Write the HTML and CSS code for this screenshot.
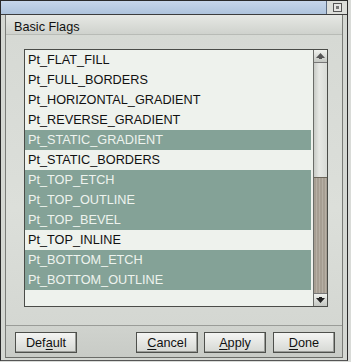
FILE: index.html
```html
<!DOCTYPE html>
<html lang="en">
<head>
  <meta charset="UTF-8">
  <title>Basic Flags</title>
  <link rel="stylesheet" href="styles.css">
</head>
<body>
  <div class="window">
    <div class="titlebar">
      <div class="title-fill"></div>
      <div class="title-btns"><span class="close-btn"></span></div>
    </div>
    <div class="panel">
      <div class="group-label">Basic Flags</div>
      <div class="list-area">
        <div class="listbox">
          <ul class="list">
            <li>Pt_FLAT_FILL</li>
            <li>Pt_FULL_BORDERS</li>
            <li>Pt_HORIZONTAL_GRADIENT</li>
            <li>Pt_REVERSE_GRADIENT</li>
            <li class="sel">Pt_STATIC_GRADIENT</li>
            <li>Pt_STATIC_BORDERS</li>
            <li class="sel">Pt_TOP_ETCH</li>
            <li class="sel">Pt_TOP_OUTLINE</li>
            <li class="sel">Pt_TOP_BEVEL</li>
            <li>Pt_TOP_INLINE</li>
            <li class="sel">Pt_BOTTOM_ETCH</li>
            <li class="sel">Pt_BOTTOM_OUTLINE</li>
          </ul>
          <div class="scrollbar">
            <div class="arrow up"><svg width="9" height="6" viewBox="0 0 9 6"><path d="M4.5 0 L9 5 L6 5 L6 6 L3 6 L3 5 L0 5 Z" fill="#555"/></svg></div>
            <div class="trough"></div>
            <div class="thumb"></div>
            <div class="arrow down"><svg width="9" height="6" viewBox="0 0 9 6"><path d="M4.5 6 L9 1 L6 1 L6 0 L3 0 L3 1 L0 1 Z" fill="#222"/></svg></div>
          </div>
        </div>
      </div>
      <div class="footer">
        <button class="btn">Def<u>a</u>ult</button>
        <div class="spacer"></div>
        <button class="btn btn-cancel"><u>C</u>ancel</button>
        <button class="btn"><u>A</u>pply</button>
        <button class="btn"><u>D</u>one</button>
      </div>
    </div>
  </div>
</body>
</html>
```

FILE: styles.css
```css
html, body {
  margin: 0;
  padding: 0;
  background: #d9dbd8;
}

body {
  font-family: "Liberation Sans", Arial, sans-serif;
  font-size: 12.7px;
  color: #111;
}

.window {
  width: 348px;
  height: 361px;
  box-sizing: border-box;
  background: #d4d7d2;
  border: 1px solid #2a2a2a;
  border-bottom-color: #555;
  display: flex;
  flex-direction: column;
}

.titlebar {
  height: 13px;
  flex-shrink: 0;
  display: flex;
  border-bottom: 1px solid #3c3c3c;
}

.title-fill {
  flex: 1;
  background: linear-gradient(#c6d6ea, #aec3dc);
  border-right: 1px solid #5a6a80;
}

.title-btns {
  width: 20px;
  background: #dcdeda;
  display: flex;
  align-items: center;
  justify-content: center;
}

.close-btn {
  width: 7px;
  height: 7px;
  border: 1px solid #555;
  background: linear-gradient(135deg, #f2f2f2, #a8aaa6);
  box-shadow: inset 0 0 0 2px #e6e6e4;
  position: relative;
}

.close-btn::after {
  content: "";
  position: absolute;
  left: 2px;
  top: 2px;
  width: 3px;
  height: 3px;
  background: #777;
}

.panel {
  margin: 0 4px 2px 4px;
  border-left: 1px solid #7a7c78;
  border-right: 1px solid #7a7c78;
  border-bottom: 1px solid #6a6c68;
  display: flex;
  flex-direction: column;
  background: #d8dbd6;
}

.group-label {
  flex-shrink: 0;
  height: 20px;
  box-sizing: border-box;
  line-height: 14px;
  padding: 5px 0 0 8px;
  background: linear-gradient(#e6e8e4, #cfd2cd);
  border-bottom: 1px solid #b8bbb6;
  color: #111;
}

.list-area {
  flex-shrink: 0;
  padding: 14px 14px 18px 18px;
  background: linear-gradient(#d6d9d4, #dcdfda 60%, #d4d7d2);
  border-top: 0;
  border-bottom: 1px solid #9a9c98;
}

.listbox {
  display: flex;
  height: 256px;
  border: 1px solid #4a4c48;
  background: #eef2ed;
}

.list {
  flex: 1;
  margin: 0;
  padding: 0 2px 0 0;
  list-style: none;
}

.list li {
  height: 20px;
  line-height: 20px;
  padding-left: 3px;
  white-space: nowrap;
  overflow: hidden;
}

.list li.sel {
  background: #84a297;
  color: #eef3ee;
}

.scrollbar {
  width: 13px;
  display: flex;
  flex-direction: column;
  border-left: 1px solid #6a6c68;
  background: #dfe2dd;
}

.arrow {
  height: 12px;
  flex-shrink: 0;
  display: flex;
  align-items: center;
  justify-content: center;
  background: linear-gradient(#f0f2ee, #c4c7c2);
  border-bottom: 1px solid #777;
}

.arrow.down {
  border-bottom: none;
  border-top: 1px solid #777;
}

.trough {
  flex: 1;
  background: linear-gradient(90deg, #c8cbc6, #e6e8e4 40%, #d8dbd6);
}

.thumb {
  height: 115px;
  flex-shrink: 0;
  border-top: 1px solid #6a6458;
  background: repeating-linear-gradient(90deg, #a69e92 0 2px, #b6afa4 2px 3px);
}

.footer {
  flex-shrink: 0;
  height: 31px;
  box-sizing: border-box;
  display: flex;
  align-items: flex-start;
  gap: 7px;
  padding: 6px 7px 0 9px;
  background: linear-gradient(#d0d3ce, #c8cbc6);
}

.spacer {
  flex: 1;
}

.btn {
  font-family: "Liberation Sans", Arial, sans-serif;
  font-size: 12.7px;
  color: #111;
  height: 21px;
  padding: 0;
  width: 62px;
  border: 1px solid #4e504c;
  background: linear-gradient(#f4f5f3, #d6d8d4);
  box-shadow: inset -1px -1px 0 #9a9c98;
}

.btn u {
  text-decoration-thickness: 1px;
  text-underline-offset: 2px;
}

.btn-cancel {
  margin-right: -1px;
}
```
